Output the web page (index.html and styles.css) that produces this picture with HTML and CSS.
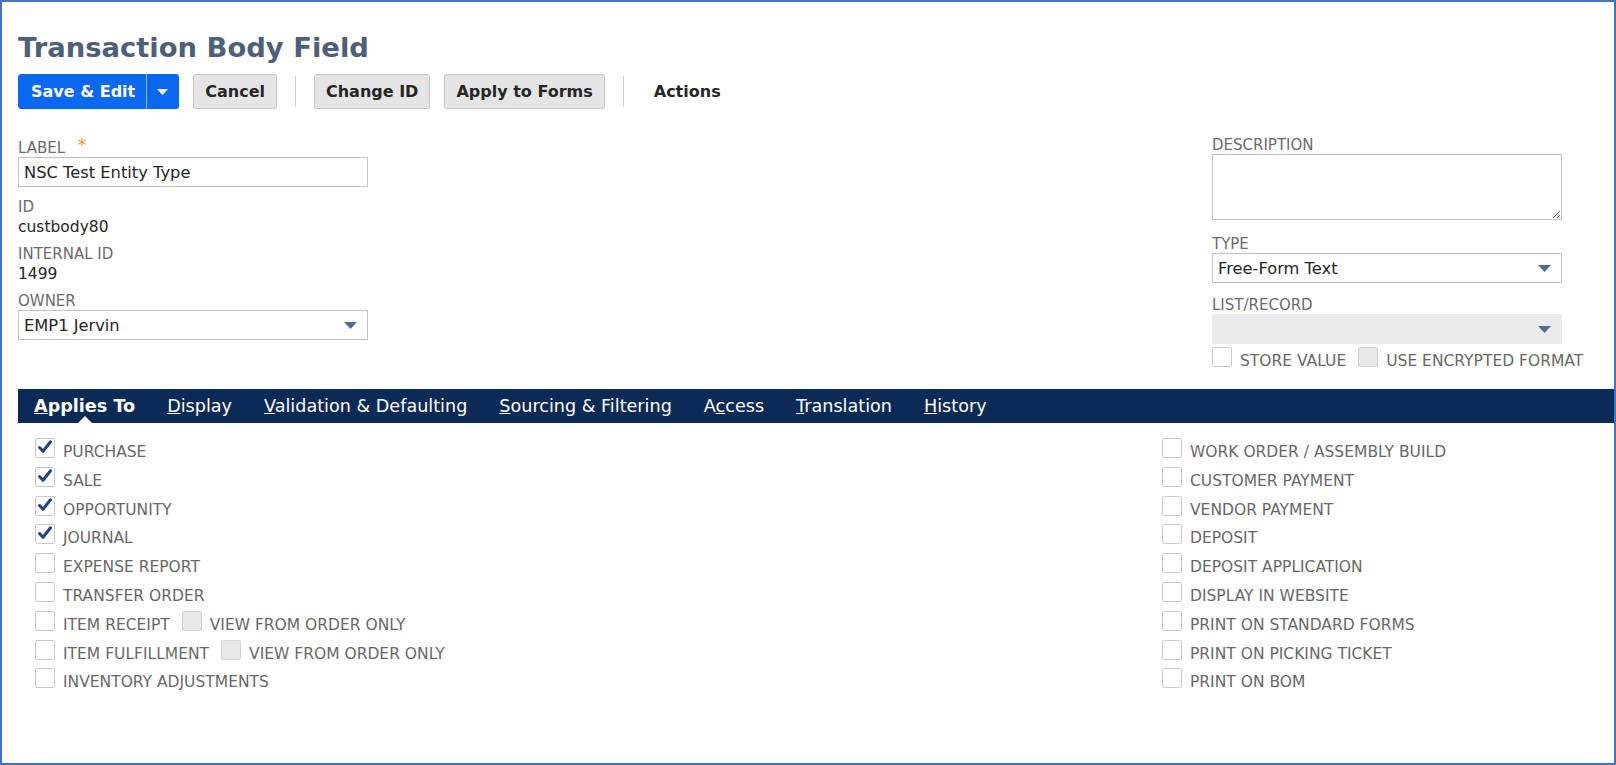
FILE: index.html
```html
<!DOCTYPE html>
<html lang="en">
<head>
  <meta charset="UTF-8">
  <meta name="viewport" content="width=device-width, initial-scale=1.0">
  <title>Transaction Body Field</title>
  <link rel="stylesheet" href="styles.css">
</head>
<body>
  <div class="frame">
    <h1 class="page-title">Transaction Body Field</h1>

    <div class="toolbar">
      <div class="btn-split">
        <button class="btn btn-primary">Save &amp; Edit</button>
        <button class="btn btn-primary btn-caret"><svg width="11" height="6" viewBox="0 0 11 6"><path d="M0 0h11L5.5 6z" fill="#fff"/></svg></button>
      </div>
      <button class="btn">Cancel</button>
      <span class="sep"></span>
      <button class="btn">Change ID</button>
      <button class="btn">Apply to Forms</button>
      <span class="sep"></span>
      <span class="menu">Actions</span>
    </div>

    <div class="fields">
      <div class="col col-left">
        <div class="field field-first">
          <div class="field-label">LABEL <span class="req">*</span></div>
          <input class="input" type="text" value="NSC Test Entity Type">
        </div>
        <div class="field">
          <div class="field-label">ID</div>
          <div class="field-value">custbody80</div>
        </div>
        <div class="field">
          <div class="field-label">INTERNAL ID</div>
          <div class="field-value">1499</div>
        </div>
        <div class="field">
          <div class="field-label">OWNER</div>
          <div class="select">
            <span>EMP1 Jervin</span>
            <svg class="arrow" width="13" height="7" viewBox="0 0 13 7"><path d="M0 0h13L6.5 7z"/></svg>
          </div>
        </div>
      </div>

      <div class="col col-right">
        <div class="field">
          <div class="field-label">DESCRIPTION</div>
          <textarea class="textarea"></textarea>
        </div>
        <div class="field">
          <div class="field-label">TYPE</div>
          <div class="select">
            <span>Free-Form Text</span>
            <svg class="arrow" width="13" height="7" viewBox="0 0 13 7"><path d="M0 0h13L6.5 7z"/></svg>
          </div>
        </div>
        <div class="field field-list">
          <div class="field-label">LIST/RECORD</div>
          <div class="select disabled">
            <span></span>
            <svg class="arrow" width="13" height="7" viewBox="0 0 13 7"><path d="M0 0h13L6.5 7z"/></svg>
          </div>
        </div>
        <div class="check-row inline">
          <span class="cb"></span><span class="cb-label">STORE VALUE</span>
          <span class="cb disabled"></span><span class="cb-label">USE ENCRYPTED FORMAT</span>
        </div>
      </div>
    </div>

    <div class="tabs">
      <span class="tab active"><u>A</u>pplies To</span>
      <span class="tab"><u>D</u>isplay</span>
      <span class="tab"><u>V</u>alidation &amp; Defaulting</span>
      <span class="tab"><u>S</u>ourcing &amp; Filtering</span>
      <span class="tab">A<u>c</u>cess</span>
      <span class="tab"><u>T</u>ranslation</span>
      <span class="tab"><u>H</u>istory</span>
    </div>

    <div class="applies">
      <ul class="check-list" id="leftList"></ul>
      <ul class="check-list" id="rightList"></ul>
    </div>
  </div>

  <script>
    // applies-to options; sub = the greyed "view from order only" box
    const leftItems = [
      { label: "PURCHASE", checked: true },
      { label: "SALE", checked: true },
      { label: "OPPORTUNITY", checked: true },
      { label: "JOURNAL", checked: true },
      { label: "EXPENSE REPORT" },
      { label: "TRANSFER ORDER" },
      { label: "ITEM RECEIPT", sub: "VIEW FROM ORDER ONLY" },
      { label: "ITEM FULFILLMENT", sub: "VIEW FROM ORDER ONLY" },
      { label: "INVENTORY ADJUSTMENTS" }
    ];
    const rightItems = [
      { label: "WORK ORDER / ASSEMBLY BUILD" },
      { label: "CUSTOMER PAYMENT" },
      { label: "VENDOR PAYMENT" },
      { label: "DEPOSIT" },
      { label: "DEPOSIT APPLICATION" },
      { label: "DISPLAY IN WEBSITE" },
      { label: "PRINT ON STANDARD FORMS" },
      { label: "PRINT ON PICKING TICKET" },
      { label: "PRINT ON BOM" }
    ];

    const tick = '<svg width="18" height="18" viewBox="0 0 18 18"><path d="M3.5 8.5l3.5 3.8 7.5-9.5" fill="none" stroke="#21467f" stroke-width="3" stroke-linecap="round" stroke-linejoin="round"/></svg>';

    function renderList(id, items) {
      const list = document.getElementById(id);
      items.forEach(item => {
        const li = document.createElement('li');
        li.className = 'check-row';
        let html = `<span class="cb${item.checked ? ' checked' : ''}">${item.checked ? tick : ''}</span>
          <span class="cb-label">${item.label}</span>`;
        if (item.sub) {
          html += `<span class="cb disabled"></span><span class="cb-label">${item.sub}</span>`;
        }
        li.innerHTML = html;
        list.appendChild(li);
      });
    }

    renderList('leftList', leftItems);
    renderList('rightList', rightItems);
  </script>
</body>
</html>
```

FILE: styles.css
```css
body {
  margin: 0;
  font-family: "DejaVu Sans", Verdana, sans-serif;
  color: #262626;
  background: #fff;
}
.frame {
  box-sizing: border-box;
  width: 1616px;
  height: 765px;
  border: 2px solid #4472c4;
  padding: 31px 0 0 16px;
}
.page-title {
  margin: 0;
  font-size: 27.4px;
  line-height: 30px;
  font-weight: bold;
  color: #4d5f79;
}
/* toolbar */
.toolbar {
  display: flex;
  align-items: center;
  gap: 14px;
  height: 35px;
  margin-top: 11px;
}
.btn {
  height: 35px;
  padding: 0 11px;
  border: 1px solid #c6c6c6;
  border-radius: 3px;
  background: #e5e5e5;
  font-family: inherit;
  font-size: 16px;
  font-weight: bold;
  color: #262626;
}
.btn-split {
  display: flex;
}
.btn-primary {
  background: #0c68f0;
  border-color: #0c68f0;
  color: #fff;
}
.btn-split .btn-primary:first-child {
  border-radius: 3px 0 0 3px;
  padding: 0 10px 0 12px;
}
.btn-caret {
  width: 33px;
  padding: 0;
  border-radius: 0 3px 3px 0;
  border-left: 1px solid #8db6f7;
  display: flex;
  align-items: center;
  justify-content: center;
}
.sep {
  width: 1px;
  height: 31px;
  background: #cfcfcf;
  margin: 0 4px;
}
.menu {
  font-size: 16px;
  font-weight: bold;
  color: #262626;
  padding-left: 12px;
}
/* header fields */
.fields {
  display: flex;
  justify-content: space-between;
  padding-right: 52px;
  margin-top: 27px;
}
.col {
  width: 350px;
}
.col-left .field + .field {
  margin-top: 8px;
}
.col-left .field-first {
  padding-bottom: 3px;
}
.col-right .field + .field {
  margin-top: 15px;
}
.col-right .field + .field-list {
  margin-top: 13px;
}
.field-label {
  font-size: 15px;
  line-height: 18px;
  color: #6b6b6b;
}
.req {
  color: #e49b22;
  font-size: 17px;
  margin-left: 8px;
  vertical-align: 2px;
}
.field-value {
  margin-top: 1px;
  font-size: 15.5px;
  line-height: 20px;
}
.input {
  display: block;
  box-sizing: border-box;
  width: 100%;
  height: 30px;
  margin: 0;
  padding: 0 5px;
  border: 1px solid #c4c4c4;
  font-family: inherit;
  font-size: 16.3px;
  color: #262626;
  outline: none;
}
.textarea {
  display: block;
  box-sizing: border-box;
  width: 100%;
  height: 66px;
  margin: 0;
  border: 1px solid #c4c4c4;
  font-family: inherit;
  resize: both;
}
.select {
  box-sizing: border-box;
  height: 30px;
  display: flex;
  align-items: center;
  justify-content: space-between;
  padding: 0 10px 0 5px;
  border: 1px solid #c4c4c4;
  font-size: 16.3px;
}
.select.disabled {
  background: #ebebeb;
  border-color: #ebebeb;
}
.arrow path {
  fill: #506c91;
}
/* tabs */
.tabs {
  display: flex;
  align-items: center;
  gap: 32px;
  height: 34px;
  margin-top: 18px;
  padding-left: 16px;
  background: #0c2a56;
}
.tab {
  position: relative;
  line-height: 34px;
  font-size: 17.6px;
  color: #fff;
}
.tab.active {
  font-weight: bold;
}
.tab.active::after {
  content: "";
  position: absolute;
  left: 50%;
  bottom: 0;
  margin-left: -7px;
  border-style: solid;
  border-width: 0 7px 7px;
  border-color: transparent transparent #fff;
}
/* applies-to checkboxes */
.applies {
  display: flex;
  padding: 15px 0 0 17px;
}
.check-list {
  list-style: none;
  margin: 0;
  padding: 0;
}
.check-list:first-child {
  width: 1127px;
}
.check-row {
  display: flex;
  align-items: flex-start;
  height: 28.8px;
  white-space: nowrap;
}
.check-row.inline {
  margin-top: 3px;
  height: 24px;
}
.cb {
  box-sizing: border-box;
  flex-shrink: 0;
  width: 20px;
  height: 20px;
  border: 1px solid #cacaca;
  border-radius: 2px;
  background: #fff;
}
.cb svg {
  display: block;
}
.cb.disabled {
  background: #e8e8e8;
  border-color: #d3d3d3;
}
.cb-label {
  margin: 4px 12px 0 8px;
  font-size: 15.5px;
  line-height: 20px;
  color: #686868;
}
```
